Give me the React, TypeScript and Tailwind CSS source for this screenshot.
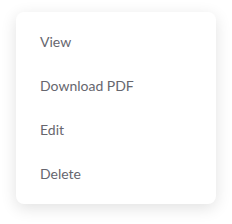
const items = ["View", "Download PDF", "Edit", "Delete"];

export default function App() {
  return (
    <div className="w-[232px] h-[224px] bg-white pt-3 pl-4">
      <div className="w-[200px] rounded-lg bg-white py-2 shadow-[0_4px_16px_rgba(0,0,0,0.12)]">
        {items.map((label) => (
          <div
            key={label}
            className="flex h-11 items-center px-6 pb-0.5 text-[14px] text-[#66666e] font-['Lato',sans-serif]"
          >
            {label}
          </div>
        ))}
      </div>
    </div>
  );
}
